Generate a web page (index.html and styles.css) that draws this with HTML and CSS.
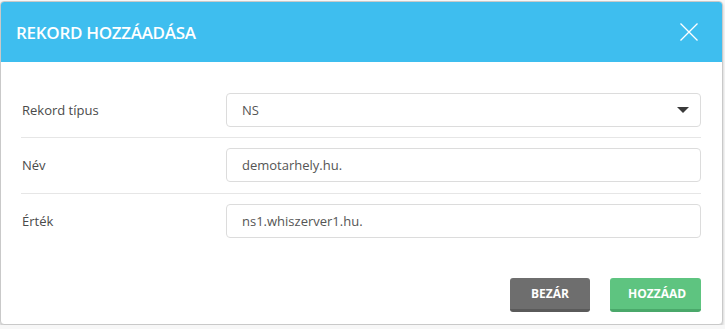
FILE: index.html
```html
<!DOCTYPE html>
<html lang="hu">
<head>
    <meta charset="UTF-8">
    <meta name="viewport" content="width=device-width, initial-scale=1.0">
    <title>Rekord hozzáadása</title>
    <link rel="stylesheet" href="styles.css">
</head>
<body>
    <div class="modal">
        <header class="modal-header">
            <h2 class="modal-title">REKORD HOZZÁADÁSA</h2>
            <button class="modal-close" aria-label="Bezár">
                <svg width="18" height="18" viewBox="0 0 18 18">
                    <path d="M0.5 0.5 L17.5 17.5 M17.5 0.5 L0.5 17.5" stroke="#fff" stroke-width="1.3" fill="none"/>
                </svg>
            </button>
        </header>

        <section class="modal-body">
            <div class="form-row">
                <label class="form-label">Rekord típus</label>
                <div class="form-field select-field">
                    <span>NS</span>
                    <span class="caret"></span>
                </div>
            </div>
            <div class="form-row">
                <label class="form-label">Név</label>
                <div class="form-field">demotarhely.hu.</div>
            </div>
            <div class="form-row">
                <label class="form-label">Érték</label>
                <div class="form-field">ns1.whiszerver1.hu.</div>
            </div>
        </section>

        <footer class="modal-footer">
            <button class="btn btn-grey">BEZÁR</button>
            <button class="btn btn-green">HOZZÁAD</button>
        </footer>
    </div>
</body>
</html>
```

FILE: styles.css
```css
body {
    margin: 0;
    padding: 0;
    background: #f7f7f7;
    font-family: 'Open Sans', sans-serif;
}

.modal {
    box-sizing: border-box;
    width: 723px;
    margin-top: 1px;
    background: #fff;
    border: 1px solid #c9c9c9;
    border-radius: 4px;
    box-shadow: 0 2px 3px rgba(0, 0, 0, 0.2);
    overflow: hidden;
}


.modal-header {
    height: 60px;
    background-color: #3ebeef;
    display: flex;
    align-items: center;
    justify-content: space-between;
    padding: 0 24px 0 15px;
}

.modal-title {
    margin: 0;
    color: #fff;
    font-size: 17px;
    font-weight: 600;
    letter-spacing: -0.3px;
}

.modal-close {
    background: none;
    border: none;
    padding: 0;
    width: 18px;
    height: 18px;
    cursor: pointer;
    display: block;
}

.modal-close svg {
    display: block;
}


.modal-body {
    padding: 21px 21px 0 20px;
}

.form-row {
    display: grid;
    grid-template-columns: 205px 1fr;
    align-items: center;
    padding: 10px 0;
    border-bottom: 1px solid #e6e6e6;
}

.form-row:nth-child(2) {
    padding-bottom: 11px;
}

.form-row:last-child {
    border-bottom: none;
}

.form-label {
    font-size: 13px;
    color: #4a4a4a;
    padding-left: 1px;
}

.form-field {
    box-sizing: border-box;
    height: 34px;
    border: 1px solid #dcdcdc;
    border-radius: 4px;
    padding: 0 15px;
    display: flex;
    align-items: center;
    font-size: 13px;
    color: #555;
}

.select-field {
    justify-content: space-between;
}

.caret {
    width: 0;
    height: 0;
    border-left: 6px solid transparent;
    border-right: 6px solid transparent;
    border-top: 6px solid #3a3a3a;
    margin-right: -4px;
}


.modal-footer {
    display: flex;
    justify-content: flex-end;
    gap: 20px;
    padding: 30px 21px 12px;
}

.btn {
    height: 34px;
    border: none;
    border-radius: 3px;
    color: #fff;
    font-family: 'Open Sans', sans-serif;
    font-size: 12px;
    font-weight: 700;
    padding: 0 18px;
    cursor: pointer;
}

.btn-grey {
    width: 80px;
    background-color: #6e6e6e;
    border-bottom: 3px solid #5a5a5a;
}

.btn-green {
    width: 91px;
    background-color: #5ec480;
    border-bottom: 3px solid #4aa86a;
}
```
